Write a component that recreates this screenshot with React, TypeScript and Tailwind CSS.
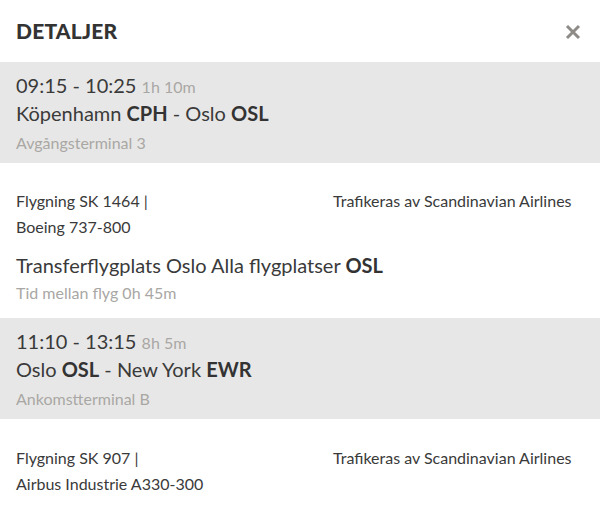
import React from "react";

const font = { fontFamily: "Lato, 'Noto Sans', sans-serif" };

function Segment({ time, dur, from, fromCode, to, toCode, terminal }: { time: string; dur: string; from: string; fromCode: string; to: string; toCode: string; terminal: string }) {
  return (
    <div className="h-[101px] bg-[#e8e7e7] px-4 pt-[10px]">
      <div className="text-[20px] leading-[26px] text-[#3a3a3a]">
        {time} <span className="text-[16px] text-[#a9a7a4]">{dur}</span>
      </div>
      <div className="text-[20px] leading-[27px] text-[#3a3a3a]">
        {from} <b className="font-bold text-[#333]">{fromCode}</b> - {to} <b className="font-bold text-[#333]">{toCode}</b>
      </div>
      <div className="text-[16px] leading-[32px] text-[#a9a7a4]">{terminal}</div>
    </div>
  );
}

function FlightInfo({ flight, plane }: { flight: string; plane: string }) {
  return (
    <div className="flex text-[16px] leading-[26px] text-[#3a3a3a]">
      <div className="w-[317px]">
        <div>{flight}</div>
        <div>{plane}</div>
      </div>
      <div>Trafikeras av Scandinavian Airlines</div>
    </div>
  );
}

export default function App() {
  return (
    <div className="w-[600px] h-[521px] bg-white overflow-hidden" style={font}>
      <div className="h-[62px] flex items-center justify-between pl-4 pr-[19px]">
        <div className="text-[21px] font-black tracking-[0.2px] text-[#333]">DETALJER</div>
        <svg width="16" height="16" viewBox="0 0 16 16" className="mt-[1px]">
          <path d="M2 2 L14 14 M14 2 L2 14" stroke="#8f8c88" strokeWidth="3" strokeLinecap="butt" />
        </svg>
      </div>
      <Segment time="09:15 - 10:25" dur="1h 10m" from="Köpenhamn" fromCode="CPH" to="Oslo" toCode="OSL" terminal="Avgångsterminal 3" />
      <div className="h-[155px] px-4 pt-[25px]">
        <FlightInfo flight="Flygning SK 1464 |" plane="Boeing 737-800" />
        <div className="mt-[11px] text-[20px] leading-[28px] text-[#3a3a3a]">
          Transferflygplats Oslo Alla flygplatser <b className="font-bold text-[#333]">OSL</b>
        </div>
        <div className="text-[16px] leading-[28px] text-[#a9a7a4]">Tid mellan flyg 0h 45m</div>
      </div>
      <Segment time="11:10 - 13:15" dur="8h 5m" from="Oslo" fromCode="OSL" to="New York" toCode="EWR" terminal="Ankomstterminal B" />
      <div className="px-4 pt-[26px]">
        <FlightInfo flight="Flygning SK 907 |" plane="Airbus Industrie A330-300" />
      </div>
    </div>
  );
}
